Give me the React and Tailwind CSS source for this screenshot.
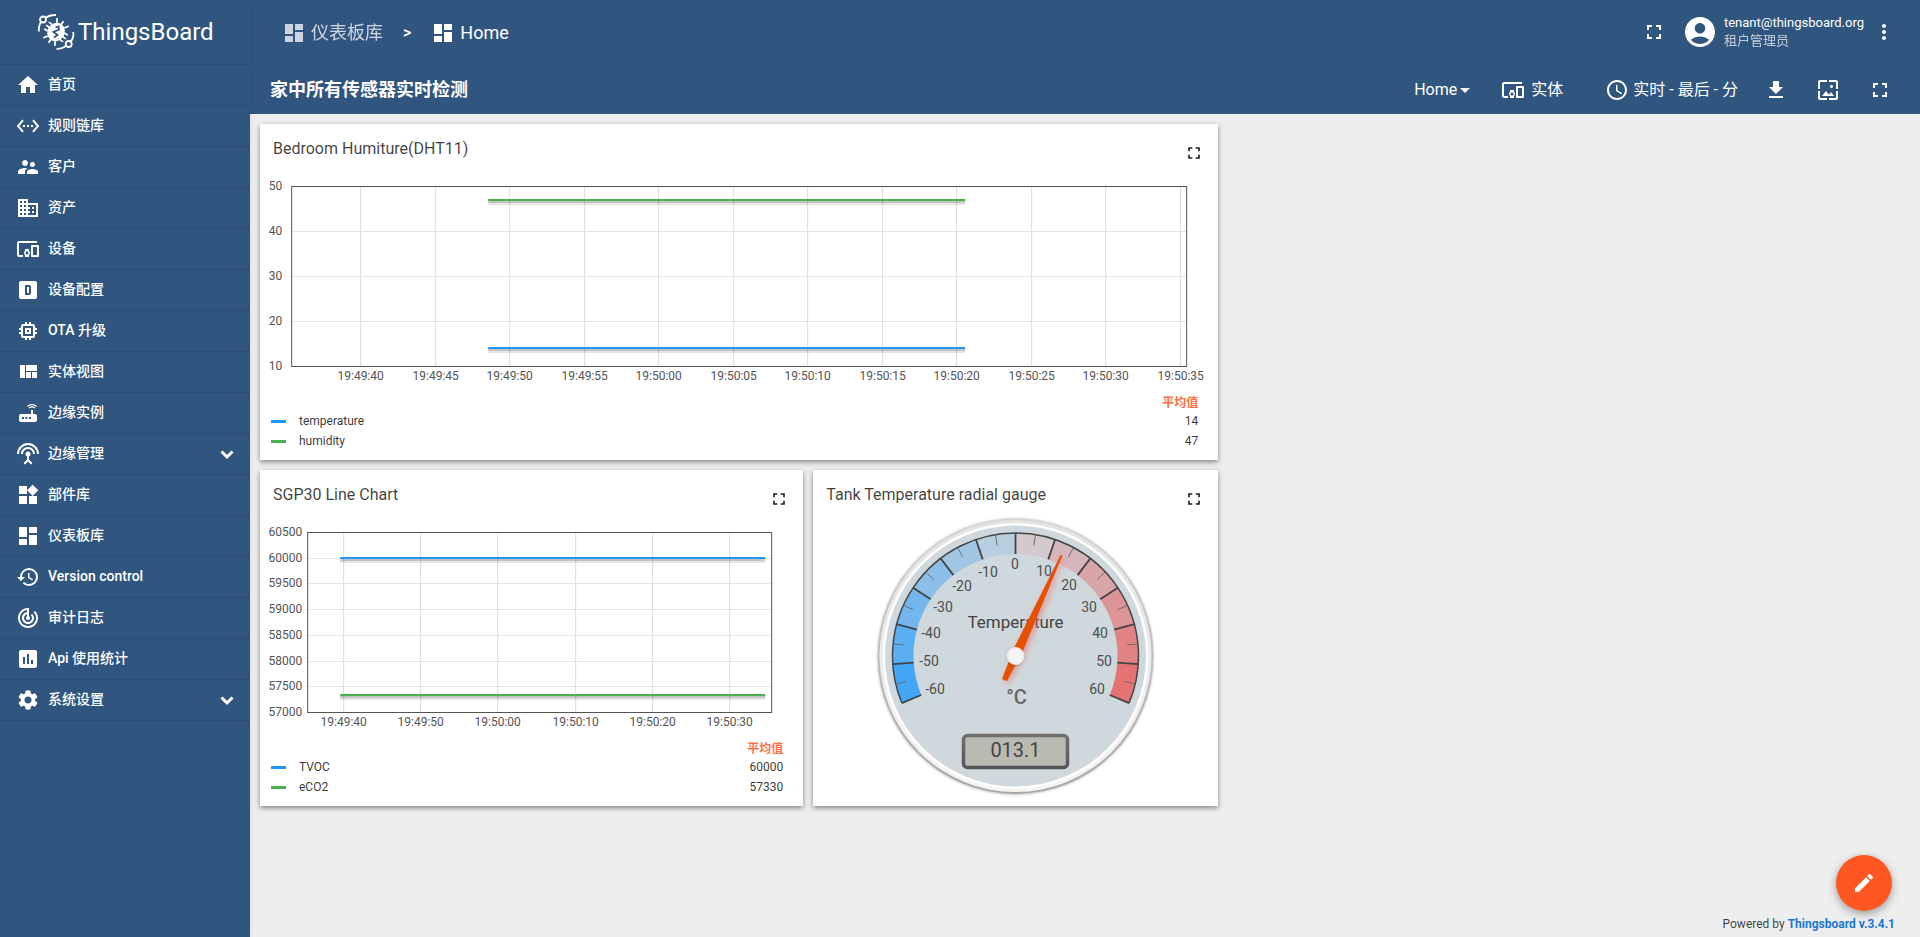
import React from 'react';
import {
  MdHome, MdSettingsEthernet, MdSupervisorAccount, MdDomain, MdDevicesOther, MdMemory,
  MdRouter, MdSettingsInputAntenna, MdDashboard, MdHistory, MdTrackChanges, MdInsertChart,
  MdSettings, MdFullscreen, MdAccountCircle, MdMoreVert, MdArrowDropDown, MdAccessTime, MdGetApp,
  MdWallpaper, MdEdit,
} from 'react-icons/md';

const AlphaDBox = ({ size }) => (
  <svg width={size} height={size} viewBox="0 0 24 24" fill="currentColor">
    <path d="M9 7H13A2 2 0 0 1 15 9V15A2 2 0 0 1 13 17H9V7M11 9V15H13V9H11M5 3A2 2 0 0 0 3 5V19A2 2 0 0 0 5 21H19A2 2 0 0 0 21 19V5A2 2 0 0 0 19 3H5Z" fillRule="evenodd" />
  </svg>
);

const QuiltIcon = ({ size }) => (
  <svg width={size} height={size} viewBox="0 0 24 24" fill="currentColor">
    <path d="M10 18h5v-6h-5v6zm-6 0h5V5H4v13zm12 0h5v-6h-5v6zM10 5v6h11V5H10z" />
  </svg>
);

const WidgetsIcon = ({ size }) => (
  <svg width={size} height={size} viewBox="0 0 24 24" fill="currentColor">
    <path d="M13 13v8h8v-8h-8zM3 21h8v-8H3v8zM3 3v8h8V3H3zm13.660-1.310L11 7.340 16.660 13l5.660-5.660-5.660-5.650z" />
  </svg>
);

const Chevron = () => (
  <svg width="14" height="14" viewBox="0 0 14 14" fill="none" stroke="currentColor" strokeWidth="3">
    <path d="M1.5 4.5 L7 10 L12.5 4.5" />
  </svg>
);

const menuItems = [
  { name: '首页', Icon: MdHome },
  { name: '规则链库', Icon: MdSettingsEthernet },
  { name: '客户', Icon: MdSupervisorAccount },
  { name: '资产', Icon: MdDomain },
  { name: '设备', Icon: MdDevicesOther },
  { name: '设备配置', Icon: AlphaDBox },
  { name: 'OTA 升级', Icon: MdMemory },
  { name: '实体视图', Icon: QuiltIcon },
  { name: '边缘实例', Icon: MdRouter },
  { name: '边缘管理', Icon: MdSettingsInputAntenna, expandable: true },
  { name: '部件库', Icon: WidgetsIcon },
  { name: '仪表板库', Icon: MdDashboard },
  { name: 'Version control', Icon: MdHistory },
  { name: '审计日志', Icon: MdTrackChanges },
  { name: 'Api 使用统计', Icon: MdInsertChart },
  { name: '系统设置', Icon: MdSettings, expandable: true },
];

const Logo = () => (
  <div className="flex h-16 items-center pl-9">
    <svg width="40" height="40" viewBox="0 0 40 40" fill="none" stroke="white" strokeWidth="1.8">
      <g transform="rotate(35 20 20)">
        <ellipse cx="20" cy="20" rx="8.5" ry="9.5" fill="white" stroke="none" />
        <path d="M15.500 12 L13 8 M20 11 V7 M24.500 12 L27 8 M12.500 16 H8.500 M12 20 H8 M12.500 24 H8.500 M27.500 16 H31.500 M28 20 H32 M27.500 24 H31.500 M15.500 28 L13 32 M20 29 V33 M24.500 28 L27 32" />
      </g>
      <path d="M19.500 15.500 L22.500 14.500 L23 17.500 L17.500 20 L21.500 23 L18 25.500" stroke="#305680" strokeWidth="1.800" />
      <circle cx="7" cy="7.500" r="3" />
      <path d="M3 19.500 Q2.300 13.500 5.200 10 M9.800 5.800 Q13.500 2.800 20 3" />
      <circle cx="32.700" cy="32" r="3" />
      <path d="M37.300 20 Q38 26 34.600 29.600 M30 33.700 Q26.500 37 20.500 36.800" />
    </svg>
    <span className="pl-0.5 text-2xl">ThingsBoard</span>
  </div>
);

const Sidebar = () => (
  <aside className="z-10 w-[250px] shrink-0 bg-[#305680] text-white shadow-md">
    <Logo />
    <nav className="border-t border-[#2a4a6e]">
      {menuItems.map(({ name, Icon, expandable }) => (
        <a key={name} href="#" className="flex h-[41px] items-center border-b border-[#2a4a6e] px-4 text-sm font-medium">
          <Icon size={24} />
          <span className="flex-1 pb-0.5 pl-2">{name}</span>
          {expandable && <Chevron />}
        </a>
      ))}
    </nav>
  </aside>
);

const Header = () => (
  <header className="bg-[#305680] text-white">
    <div className="flex h-16 items-center justify-between pl-8 pr-6">
      <div className="flex items-center pt-0.5 text-lg">
        <a href="#" className="flex items-center gap-[5px] opacity-75"><MdDashboard size={24} />仪表板库</a>
        <span className="px-5 text-base font-medium">&gt;</span>
        <a href="#" className="flex items-center gap-[5px]"><MdDashboard size={24} />Home</a>
      </div>
      <div className="flex items-center">
        <button aria-label="全屏"><MdFullscreen size={24} /></button>
        <div className="flex items-center pl-4">
          <MdAccountCircle size={36} />
          <div className="pl-1.5 text-[13px] leading-[18px]">
            <p>tenant@thingsboard.org</p>
            <p className="opacity-70">租户管理员</p>
          </div>
        </div>
        <button aria-label="菜单" className="pl-2"><MdMoreVert size={24} /></button>
      </div>
    </div>
    <div className="flex h-[50px] items-center justify-between pl-5 pr-7 pt-0.5">
      <h1 className="text-lg font-bold">家中所有传感器实时检测</h1>
      <div className="flex items-center text-base">
        <button className="flex items-center">Home<MdArrowDropDown size={24} className="-ml-1" /></button>
        <button className="flex items-center gap-1.5 pl-6"><MdDevicesOther size={24} />实体</button>
        <button className="flex items-center gap-1 pl-[42px]"><MdAccessTime size={24} />实时 - 最后 - 分</button>
        <button aria-label="导出" className="pl-[26px]"><MdGetApp size={24} /></button>
        <button aria-label="背景" className="pl-7"><MdWallpaper size={24} /></button>
        <button aria-label="全屏" className="pl-7"><MdFullscreen size={24} /></button>
      </div>
    </div>
  </header>
);

const Widget = ({ title, className, children }) => (
  <section className={`flex h-[336px] flex-col bg-white shadow-[0_2px_5px_rgba(0,0,0,0.45)] ${className}`}>
    <div className="flex h-[50px] shrink-0 items-start justify-between pl-[13px] pr-[14px] pt-3 text-[#212121]">
      <h2 className="text-base font-normal leading-[26px] text-black/75">{title}</h2>
      <button aria-label="全屏" className="pt-[7px]"><MdFullscreen size={20} /></button>
    </div>
    {children}
  </section>
);

// Plot area: everything is measured in the pixels of the svg viewBox
const LineChart = ({ width, left, right, labelEnd, yTicks, xTicks, xStart, xStep, series, from, to }) => {
  const top = 12;
  const bottom = 192;
  const rowGap = (bottom - top) / (yTicks.length - 1);
  return (
    <svg viewBox={`0 0 ${width} 217`} className="h-[217px] w-full shrink-0" fontSize="12" fill="#545454">
      {xTicks.map((tick, i) => {
        const x = Math.round(xStart + i * xStep) + 0.5;
        return (
          <g key={tick}>
            <line x1={x} x2={x} y1={top} y2={bottom} stroke="#dcdcdc" />
            <text x={x} y="206" textAnchor="middle">{tick}</text>
          </g>
        );
      })}
      {yTicks.map((tick, i) => {
        const y = Math.round(top + i * rowGap);
        return (
          <g key={tick}>
            <line x1={left} x2={right} y1={y + 0.5} y2={y + 0.5} stroke="#e4e4e4" />
            <text x={labelEnd} y={y + 4} textAnchor="end">{tick}</text>
          </g>
        );
      })}
      <rect x={left + 0.5} y={top + 0.5} width={right - left} height={bottom - top} fill="none" stroke="#545454" />
      {series.map(({ color, y }) => (
        <g key={color}>
          <rect x={from} y={y + 1} width={to - from} height="4" fill="#000" opacity="0.1" />
          <rect x={from} y={y + 1} width={to - from} height="2" fill="#000" opacity="0.15" />
          <rect x={from} y={y - 1} width={to - from} height="2" fill={color} />
        </g>
      ))}
    </svg>
  );
};

const Legend = ({ rows }) => (
  <table className="ml-[11px] mr-5 text-xs leading-5 text-black/80">
    <thead>
      <tr>
        <th className="w-7" />
        <th />
        <th className="pt-1 text-right font-bold leading-4 text-[#ff6e40]">平均值</th>
      </tr>
    </thead>
    <tbody>
      {rows.map((row) => (
        <tr key={row.name}>
          <td><span className="block h-[3px] w-[15px]" style={{ backgroundColor: row.color }} /></td>
          <td>{row.name}</td>
          <td className="text-right">{row.value}</td>
        </tr>
      ))}
    </tbody>
  </table>
);

const CX = 202.5;
const CY = 136;
const bandColors = ['#42a5f5', '#5aaff2', '#74b7ee', '#8bbfea', '#a0c6e4', '#b7cfdf', '#d3c9cf', '#d5b6bb', '#d9a5a8', '#dd9497', '#e18385', '#e57373'];

const gaugeLabels = [
  [-60, 122, 169], [-50, 116, 141], [-40, 118, 113], [-30, 130, 87], [-20, 149, 66], [-10, 175, 52], [0, 202, 44],
  [10, 231, 51], [20, 256, 65], [30, 276, 87], [40, 287, 113], [50, 291, 141], [60, 284, 169],
];

// 120 units are spread over 225 degrees, zero is at the top
const toDeg = (value) => value * 1.875;

const polar = (deg, r) => {
  const a = (deg * Math.PI) / 180;
  return `${CX + r * Math.sin(a)} ${CY - r * Math.cos(a)}`;
};

const band = (from, to) => (
  `M${polar(from, 123)} A123 123 0 0 1 ${polar(to, 123)} L${polar(to, 102)} A102 102 0 0 0 ${polar(from, 102)} Z`
);

const RadialGauge = ({ value }) => (
  <svg viewBox="0 0 405 286" className="h-[286px] w-full shrink-0 overflow-visible">
    <defs>
      <linearGradient id="rim" x1="0" y1="0" x2="0" y2="1">
        <stop offset="0" stopColor="#d6d6d6" />
        <stop offset="1" stopColor="#a6a6a6" />
      </linearGradient>
      <linearGradient id="ring" x1="0" y1="0" x2="0" y2="1">
        <stop offset="0" stopColor="#e2e2e2" />
        <stop offset="1" stopColor="#f4f4f4" />
      </linearGradient>
      <linearGradient id="lcdFrame" x1="0" y1="0" x2="0" y2="1">
        <stop offset="0" stopColor="#707070" />
        <stop offset="1" stopColor="#555" />
      </linearGradient>
      <filter id="glow" x="-50%" y="-50%" width="200%" height="200%">
        <feDropShadow dx="2" dy="2" stdDeviation="3" floodColor="#e57373" floodOpacity="0.7" />
      </filter>
      <filter id="soft" x="-10%" y="-10%" width="120%" height="120%">
        <feDropShadow dx="0" dy="0.5" stdDeviation="0.8" floodColor="#000" floodOpacity="0.3" />
      </filter>
    </defs>

    <circle cx={CX} cy={CY} r="138" fill="url(#rim)" filter="url(#soft)" />
    <circle cx={CX} cy={CY} r="136" fill="url(#ring)" />
    <circle cx={CX} cy={CY} r="133" fill="#fff" />
    <circle cx={CX} cy={CY} r="130.5" fill="#cfd8dc" />

    {bandColors.map((color, i) => (
      <path key={color} d={band(toDeg(-60 + i * 10), toDeg(-50 + i * 10))} fill={color} />
    ))}
    <path d={`M${polar(-112.5, 123)} A123 123 0 1 1 ${polar(112.5, 123)}`} fill="none" stroke="#444" strokeWidth="1.5" />
    {gaugeLabels.map(([tick]) => (
      <path key={tick} d={`M${polar(toDeg(tick), 102)} L${polar(toDeg(tick), 123)}`} stroke="#444" strokeWidth="1.8" />
    ))}
    {bandColors.map((color, i) => (
      <path key={color} d={`M${polar(toDeg(-55 + i * 10), 112)} L${polar(toDeg(-55 + i * 10), 122)}`} stroke="#666" strokeWidth="0.9" />
    ))}

    <g fontSize="14" fill="#4c4f51" textAnchor="middle">
      {gaugeLabels.map(([tick, x, y]) => (
        <text key={tick} x={x} y={y + 5}>{tick}</text>
      ))}
      <text x={CX} y="108" fontSize="17" fill="#444">Temperature</text>
      <text x={CX + 1} y="184" fontSize="20" fontWeight="500" fill="#666">°C</text>
    </g>

    <rect x="150.500" y="215.500" width="104" height="32" rx="4" fill="#babab2" stroke="url(#lcdFrame)" strokeWidth="3.5" />
    <text x={CX} y="237" fontSize="20" fill="#444" textAnchor="middle">{`0${value}`}</text>

    <g filter="url(#glow)">
      <path
        transform={`translate(${CX} ${CY}) rotate(${toDeg(value)})`}
        d="M-1 -111 L1 -111 L4.600 -8 L2.800 26.500 L-2.800 26.500 L-4.600 -8 Z"
        fill="#e65100"
      />
    </g>
    <circle cx={CX} cy={CY} r="9" fill="#ececec" filter="url(#soft)" />
    <circle cx={CX} cy={CY} r="7" fill="#f5f5f5" />
  </svg>
);

const App = () => (
  <div className="flex min-h-screen bg-[#eee] font-[Roboto,'Noto_Sans_CJK_SC',sans-serif]">
    <Sidebar />
    <div className="flex min-w-0 flex-1 flex-col">
      <Header />
      <main className="grid grid-cols-24 gap-[10px] p-[10px]">
        <Widget title="Bedroom Humiture(DHT11)" className="col-span-14">
          <LineChart
            width={958} left={31} right={926} labelEnd={22} xStart={100} xStep={74.5} from={228} to={705}
            yTicks={[50, 40, 30, 20, 10]}
            xTicks={['19:49:40', '19:49:45', '19:49:50', '19:49:55', '19:50:00', '19:50:05', '19:50:10', '19:50:15', '19:50:20', '19:50:25', '19:50:30', '19:50:35']}
            series={[{ color: '#4caf50', y: 26 }, { color: '#2196f3', y: 174 }]}
          />
          <Legend rows={[{ name: 'temperature', value: 14, color: '#2196f3' }, { name: 'humidity', value: 47, color: '#4caf50' }]} />
        </Widget>
        <Widget title="SGP30 Line Chart" className="col-span-8 col-start-1">
          <LineChart
            width={543} left={47} right={511} labelEnd={42} xStart={83} xStep={77.2} from={80} to={505}
            yTicks={[60500, 60000, 59500, 59000, 58500, 58000, 57500, 57000]}
            xTicks={['19:49:40', '19:49:50', '19:50:00', '19:50:10', '19:50:20', '19:50:30']}
            series={[{ color: '#2196f3', y: 38 }, { color: '#4caf50', y: 175 }]}
          />
          <Legend rows={[{ name: 'TVOC', value: 60000, color: '#2196f3' }, { name: 'eCO2', value: 57330, color: '#4caf50' }]} />
        </Widget>
        <Widget title="Tank Temperature radial gauge" className="col-span-6">
          <RadialGauge value={13.1} />
        </Widget>
      </main>
      <footer className="mt-auto pb-[5px] pr-[25px] text-right text-xs text-black/75">
        Powered by <a href="#" className="font-bold text-[#1976d2]">Thingsboard v.3.4.1</a>
      </footer>
    </div>
    <button aria-label="编辑" className="fixed bottom-[26px] right-7 z-20 flex h-14 w-14 items-center justify-center rounded-full bg-[#ff5722] text-white shadow-[0_3px_8px_rgba(0,0,0,0.35)]">
      <MdEdit size={24} />
    </button>
  </div>
);

export default App;
